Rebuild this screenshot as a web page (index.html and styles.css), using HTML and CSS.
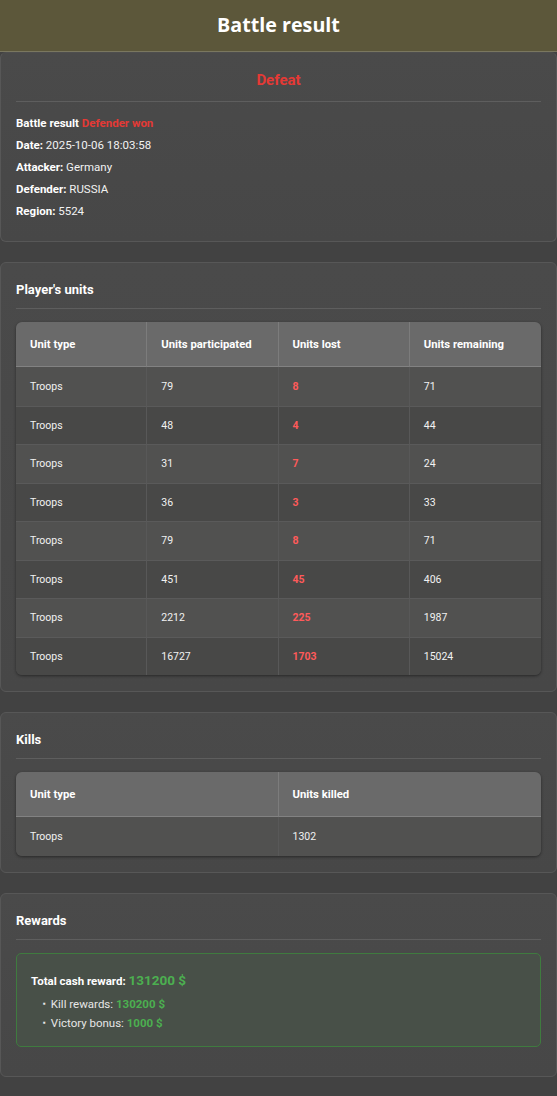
FILE: index.html
```html
<!DOCTYPE html>
<html>
<head>
<meta charset="utf-8">
<link rel="stylesheet" href="styles.css">
</head>
<body>
<header class="topbar"><h1>Battle result</h1></header>

<section class="card card-summary">
  <h2 class="outcome">Defeat</h2>
  <div class="info">
    <p><b>Battle result</b> <span class="red-b">Defender won</span></p>
    <p><b>Date:</b> 2025-10-06 18:03:58</p>
    <p><b>Attacker:</b> Germany</p>
    <p><b>Defender:</b> RUSSIA</p>
    <p><b>Region:</b> 5524</p>
  </div>
</section>

<section class="card card-units">
  <h3 class="sec-title">Player's units</h3>
  <div class="tbl cols4">
    <div class="row head"><div>Unit type</div><div>Units participated</div><div>Units lost</div><div>Units remaining</div></div>
    <div class="row"><div>Troops</div><div>79</div><div class="lost">8</div><div>71</div></div>
    <div class="row"><div>Troops</div><div>48</div><div class="lost">4</div><div>44</div></div>
    <div class="row"><div>Troops</div><div>31</div><div class="lost">7</div><div>24</div></div>
    <div class="row"><div>Troops</div><div>36</div><div class="lost">3</div><div>33</div></div>
    <div class="row"><div>Troops</div><div>79</div><div class="lost">8</div><div>71</div></div>
    <div class="row"><div>Troops</div><div>451</div><div class="lost">45</div><div>406</div></div>
    <div class="row"><div>Troops</div><div>2212</div><div class="lost">225</div><div>1987</div></div>
    <div class="row"><div>Troops</div><div>16727</div><div class="lost">1703</div><div>15024</div></div>
  </div>
</section>

<section class="card card-kills">
  <h3 class="sec-title">Kills</h3>
  <div class="tbl cols2">
    <div class="row head"><div>Unit type</div><div>Units killed</div></div>
    <div class="row"><div>Troops</div><div>1302</div></div>
  </div>
</section>

<section class="card card-rewards">
  <h3 class="sec-title">Rewards</h3>
  <div class="reward-box">
    <p class="total"><b>Total cash reward:</b> <span class="green-big">131200 $</span></p>
    <ul class="reward-list">
      <li>Kill rewards: <span class="green-b">130200 $</span></li>
      <li>Victory bonus: <span class="green-b">1000 $</span></li>
    </ul>
  </div>
</section>
</body>
</html>
```

FILE: styles.css
```css
* { box-sizing: border-box; }
html, body { margin: 0; padding: 0; }
body {
  background: #424242;
  font-family: Roboto, "Liberation Sans", Arial, sans-serif;
  color: #f2f2f2;
  font-size: 12px;
  min-height: 1096px;
}
.topbar {
  height: 52px;
  background: #5c573a;
  border-bottom: 1px solid #7a775f;
  display: flex;
  align-items: center;
  justify-content: center;
}
.topbar h1 {
  margin: 0;
  font-family: "Open Sans", "DejaVu Sans", sans-serif;
  font-weight: 700;
  font-size: 19.7px;
  color: #ffffff;
  padding-bottom: 2px;
}
.card {
  background: linear-gradient(#4a4a4a, #474747);
  border: 1px solid #575757;
  border-radius: 6px;
  padding: 16px 15px 15px 15px;
  margin: 0 0 20px 0;
}
.card-summary { padding-bottom: 19px; border-top-color: #4e4e4e; }
.outcome {
  margin: 0;
  text-align: center;
  color: #e53935;
  font-size: 15px;
  font-weight: 700;
  line-height: 22px;
  padding-bottom: 10px;
  border-bottom: 1px solid #5e5e5e;
}
.info { margin-top: 10px; }
.info p { margin: 0; line-height: 22px; font-size: 11.5px; }
.info b { font-weight: 700; color: #ffffff; }
.red-b { color: #e53935; font-weight: 700; }
.sec-title {
  margin: 0;
  font-size: 13px;
  font-weight: 700;
  color: #ffffff;
  line-height: 22px;
  height: 30px;
  padding-bottom: 7px;
  border-bottom: 1px solid #5e5e5e;
}
.tbl {
  margin-top: 13px;
  border-radius: 6px;
  overflow: hidden;
  background: #4b4b4b;
  box-shadow: 0 1px 3px rgba(0,0,0,0.45);
  font-size: 10.5px;
}
.tbl .row { display: grid; }
.cols4 .row { grid-template-columns: 1fr 1fr 1fr 1fr; }
.cols2 .row { grid-template-columns: 1fr 1fr; }
.tbl .row > div {
  padding: 0 14px;
  display: flex;
  align-items: center;
  height: 38.5px;
  border-right: 1px solid #585858;
  border-top: 1px solid #5a5a5a;
}
.tbl .row > div:last-child { border-right: none; }
.tbl .row.head > div {
  height: 45px;
  background: #6a6a6a;
  font-weight: 700;
  font-size: 11.3px;
  color: #ffffff;
  border-top: none;
  border-right: 1px solid #7c7c7c;
  border-bottom: 1px solid #828282;
}
.tbl .row.head > div:last-child { border-right: none; }
.tbl .row:nth-child(2n) > div { background: #515150; }
.tbl .row:nth-child(2n+3) > div { background: #484847; }
.tbl .row:nth-child(2) > div { border-top: none; }
.cols2 .row:not(.head) > div { height: 39px; }
.lost { color: #ff5a5a; font-weight: 700; }
.card-units { padding-bottom: 16px; }
.card-kills { padding-bottom: 16px; }
.card-rewards { padding-bottom: 29px; }
.reward-box {
  margin-top: 13px;
  height: 94px;
  background: #485048;
  border: 1px solid #3f7b3f;
  border-radius: 5px;
  padding: 18px 14px 0 14px;
}
.total { margin: 0 0 5px 0; line-height: 18px; height: 18px; font-size: 11.5px; }
.total b { color: #ffffff; }
.green-big { color: #4caf50; font-weight: 700; font-size: 13.5px; line-height: 0; }
.green-b { color: #4caf50; font-weight: 700; }
.reward-list {
  margin: 0;
  padding: 0 0 0 12px;
  list-style: none;
}
.reward-list li {
  line-height: 19px;
  height: 19px;
  font-size: 11.5px;
  color: #e6e6e6;
}
.reward-list li::before {
  content: "\25AA";
  font-size: 8px;
  line-height: 0;
  margin-right: 5px;
  vertical-align: 2px;
}
```
